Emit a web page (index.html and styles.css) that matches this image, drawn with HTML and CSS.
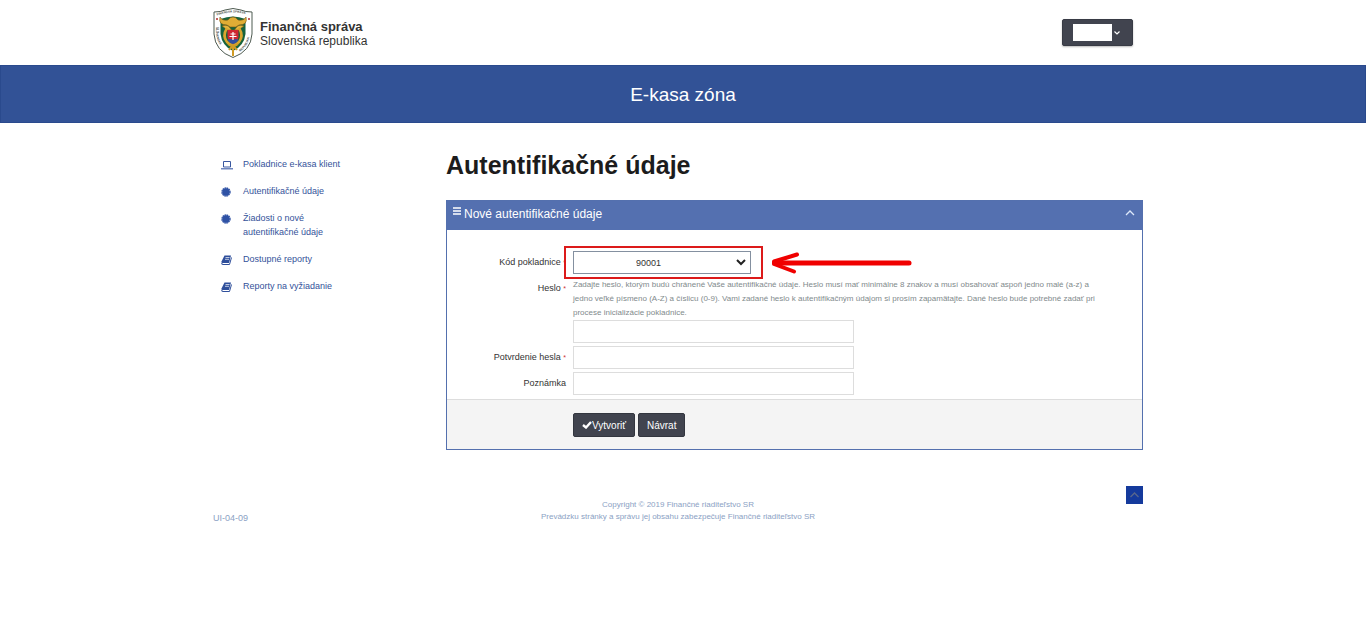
FILE: index.html
```html
<!DOCTYPE html>
<html lang="sk">
<head>
  <meta charset="UTF-8" />
  <meta name="viewport" content="width=device-width, initial-scale=1.0" />
  <title>E-kasa zóna - Autentifikačné údaje</title>
  <link rel="stylesheet" href="styles.css">
</head>
<body>
  <header class="container top">
    <a class="brand" href="#">
      <svg class="crest" viewBox="0 0 40 50" aria-hidden="true">
        <path d="M1 4 Q8 4 12 2 Q20 -1 28 2 Q32 4 39 4 V26 Q38 43 20 49.5 Q2 43 1 26 Z" fill="#fff" stroke="#4d5a50" stroke-width="1"/>
        <path d="M7.500 11 Q20 6 32.500 11 V26 Q31 38 20 43 Q9 38 7.500 26 Z" fill="#17633c"/>
        <path id="crest-top" d="M3 8 Q20 1 38 8" fill="none"/>
        <path id="crest-left" d="M3 15 V25 Q4 39 19 47" fill="none"/>
        <path id="crest-right" d="M22 47 Q36 40 37 25 V12" fill="none"/>
        <text class="crest-text"><textPath href="#crest-top" startOffset="1">FINANČNÁ SPRÁVA</textPath></text>
        <text class="crest-text"><textPath href="#crest-left" startOffset="4">SLOVENSKÁ</textPath></text>
        <text class="crest-text"><textPath href="#crest-right" startOffset="6">REPUBLIKA</textPath></text>
        <circle cx="4" cy="11" r="1" fill="#b02a2a"/><circle cx="36" cy="11" r="1" fill="#b02a2a"/>
        <path d="M7 9 Q5 17 14 17 L17 19 H23 L26 17 Q35 17 33 9 Q31 13 25 12 Q23 9 20 9 Q17 9 15 12 Q9 13 7 9Z" fill="#e0ad35" stroke="#7b5713" stroke-width=".6"/>
        <path d="M9 18 Q15 16 17 20 L20 24 L23 20 Q25 16 31 18 Q28 20 26 22 H14 Q12 20 9 18Z" fill="#e5b53c" stroke="#7b5713" stroke-width=".5"/>
        <path d="M14 20 Q9 28 14 34 Q20 40 26 34 Q31 28 26 20" fill="none" stroke="#d9a62e" stroke-width="2.600"/>
        <path d="M14.500 22 H25.500 V29 Q25 34 20 36 Q15 34 14.500 29Z" fill="#cf2732"/>
        <path d="M14.500 32 Q17 30 20 32 Q23 30 25.500 32 Q24 35 20 36 Q16 35 14.500 32Z" fill="#314f9f"/>
        <path d="M20 24 V32 M17.500 26 H22.500 M16.500 28.500 H23.500" stroke="#fff" stroke-width="1.200"/>
        <path d="M15 36 Q20 40 25 36 M16 42 Q20 36 24 42 M20 36 V48" fill="none" stroke="#d09b25" stroke-width="2"/>
      </svg>
      <span class="brand-text"><strong>Finančná správa</strong><span>Slovenská republika</span></span>
    </a>
    <button class="user-menu" type="button" aria-label="Používateľ">
      <span class="user-name"></span>
      <svg width="6" height="4" viewBox="0 0 6 4"><path d="M.5.5 3 3 5.500.5" fill="none" stroke="#fff" stroke-width="1.200"/></svg>
    </button>
  </header>

  <div class="banner">E-kasa zóna</div>

  <div class="container layout">
    <nav class="sidebar">
      <a href="#">
        <svg viewBox="0 0 12 12"><path d="M2.500 2.500H9.500V8H2.500Z" fill="none" stroke="#3a58a0"/><path d="M0 9H12V10.500H0Z" fill="#6f86bd"/></svg>
        <span>Pokladnice e-kasa klient</span>
      </a>
      <a href="#">
        <svg viewBox="0 0 12 12"><circle cx="5" cy="6" r="3.700" fill="#2f52a5"/><circle cx="5" cy="6" r="4" fill="none" stroke="#2f52a5" stroke-width="1.400" stroke-dasharray="1.600 .5"/></svg>
        <span>Autentifikačné údaje</span>
      </a>
      <a href="#">
        <svg viewBox="0 0 12 12"><circle cx="5" cy="6" r="3.700" fill="#2f52a5"/><circle cx="5" cy="6" r="4" fill="none" stroke="#2f52a5" stroke-width="1.400" stroke-dasharray="1.600 .5"/></svg>
        <span>Žiadosti o nové autentifikačné údaje</span>
      </a>
      <a href="#">
        <svg viewBox="0 0 12 12"><path d="M3.500 1.500H10L8 9H1.500Q0 9 .5 7.500Z" fill="#2f4f9b"/><path d="M4.500 3.500H8.500M4 5.300H8" stroke="#fff" stroke-width=".7"/><path d="M1 9Q0 10.500 2 10.500H8.500L10.500 3.500" fill="none" stroke="#2f4f9b"/></svg>
        <span>Dostupné reporty</span>
      </a>
      <a href="#">
        <svg viewBox="0 0 12 12"><path d="M3.500 1.500H10L8 9H1.500Q0 9 .5 7.500Z" fill="#2f4f9b"/><path d="M4.500 3.500H8.500M4 5.300H8" stroke="#fff" stroke-width=".7"/><path d="M1 9Q0 10.500 2 10.500H8.500L10.500 3.500" fill="none" stroke="#2f4f9b"/></svg>
        <span>Reporty na vyžiadanie</span>
      </a>
    </nav>

    <main>
      <h1>Autentifikačné údaje</h1>
      <form class="panel">
        <div class="panel-head">
          <svg class="bars" width="8" height="8" viewBox="0 0 8 8"><path d="M0 1H8M0 4H8M0 7H8" stroke="#fff" stroke-width="1.500"/></svg>
          <h2>Nové autentifikačné údaje</h2>
          <button class="collapse" type="button" aria-label="Zbaliť">
            <svg width="10" height="6" viewBox="0 0 10 6"><path d="M1 5 5 1 9 5" fill="none" stroke="#dde8fa" stroke-width="1.300"/></svg>
          </button>
        </div>
        <div class="fields">
          <label for="kod">Kód pokladnice <i>*</i></label>
          <div class="select-wrap">
            <select id="kod"><option>90001</option></select>
            <svg class="chevron" width="10" height="7" viewBox="0 0 10 7"><path d="M1 1 5 5 9 1" fill="none" stroke="#222" stroke-width="2"/></svg>
            <div class="highlight"></div>
            <svg class="arrow" width="142" height="24" viewBox="0 0 142 24"><path d="M139 12H5" fill="none" stroke="#f00000" stroke-width="5" stroke-linecap="round"/><path d="M27 3.500 4 10.500V13L24 20.500" fill="none" stroke="#f00000" stroke-width="4" stroke-linecap="round" stroke-linejoin="round"/></svg>
          </div>
          <label for="heslo">Heslo <i>*</i></label>
          <div>
            <p class="help">Zadajte heslo, ktorým budú chránené Vaše autentifikačné údaje. Heslo musí mať minimálne 8 znakov a musí obsahovať aspoň jedno malé (a-z) a<br>jedno veľké písmeno (A-Z) a číslicu (0-9). Vami zadané heslo k autentifikačným údajom si prosím zapamätajte. Dané heslo bude potrebné zadať pri<br>procese inicializácie pokladnice.</p>
            <input type="password" id="heslo">
          </div>
          <label for="potvrdenie">Potvrdenie hesla <i>*</i></label>
          <input type="password" id="potvrdenie">
          <label for="poznamka">Poznámka</label>
          <input type="text" id="poznamka">
        </div>
        <div class="actions">
          <button class="btn" type="button"><svg width="10" height="8" viewBox="0 0 10 8"><path d="M1 4 4 6.500 9 1" fill="none" stroke="#fff" stroke-width="2.400"/></svg>Vytvoriť</button>
          <button class="btn" type="button">Návrat</button>
        </div>
      </form>
    </main>
  </div>

  <footer class="container footer">
    <span class="code">UI-04-09</span>
    <p>Copyright © 2019 Finančné riaditeľstvo SR<br>Prevádzku stránky a správu jej obsahu zabezpečuje Finančné riaditeľstvo SR</p>
    <a class="to-top" href="#" aria-label="Hore"><svg width="9" height="6" viewBox="0 0 9 6"><path d="M.5 5 4.500 1 8.500 5" fill="none" stroke="#59678c" stroke-width="1.300"/></svg></a>
  </footer>
</body>
</html>
```

FILE: styles.css
```css
* { box-sizing: border-box; }
body { margin: 0; background: #fff; color: #333; font-family: "Liberation Sans", Arial, sans-serif; font-size: 9px; }
button, input, select { font-family: inherit; }
svg { display: block; flex-shrink: 0; }
.container { max-width: 940px; margin: 0 auto; padding-right: 10px; }

.top { display: flex; justify-content: space-between; align-items: center; height: 65px; padding-right: 20px; }
.brand { display: flex; align-items: center; gap: 7px; color: #333; text-decoration: none; }
.crest { width: 40px; height: 50px; }
.crest-text { font-size: 3px; font-weight: bold; fill: #3f4a44; }
.brand-text { display: flex; flex-direction: column; font-size: 12px; line-height: 15px; padding-top: 2px; }
.brand-text strong { font-size: 13px; }
.user-menu { display: flex; align-items: center; gap: 2px; width: 71px; height: 27px; padding: 0 10px; background: #41444f; border: 1px solid #383b45; border-radius: 2px; box-shadow: 0 1px 2px #bbb; }
.user-name { width: 39px; height: 17px; background: #fff; }

.banner { height: 58px; line-height: 58px; background: #325296; border: 1px solid #2a4a8d; color: #fff; font-size: 19px; text-align: center; }

.layout { display: grid; grid-template-columns: 233px minmax(0, 1fr); }
.sidebar { display: flex; flex-direction: column; gap: 13px; padding: 34px 100px 0 8px; }
.sidebar a { display: flex; gap: 10px; color: #34529a; line-height: 14px; text-decoration: none; }
.sidebar svg { width: 12px; height: 12px; margin-top: 2px; }
.sidebar span { white-space: normal; }

h1 { margin: 26px 0 19px; font-size: 25px; line-height: 32px; color: #1c1c1c; }
.panel { border: 1px solid #5470ae; }
.panel-head { display: flex; gap: 3px; height: 29px; padding: 0 7px 0 6px; background: #5470b0; color: #fff; }
.panel-head h2 { flex: 1; margin: 0; font-size: 12px; font-weight: normal; line-height: 26px; }
.bars { margin-top: 6px; }
.collapse { align-self: flex-start; margin-top: 9px; padding: 0; background: none; border: 0; }

.fields { display: grid; grid-template-columns: 119px minmax(0, 1fr); gap: 3px 7px; padding: 21px 16px 4px 0; }
label { text-align: right; line-height: 23px; color: #333; }
label i { color: #c33; font-size: 7px; font-style: normal; }
.fields input { display: block; width: 281px; height: 23px; border: 1px solid #ddd; background: #fff; }
.help { margin: 0; padding-top: 1px; font-size: 8px; line-height: 14px; color: #7f8a8c; }
.select-wrap { position: relative; width: 178px; }
select { display: block; width: 100%; height: 23px; padding: 0 0 0 62px; appearance: none; background: #fff; border: 1px solid #8490a0; border-radius: 0; color: #333; font-size: 9px; }
.chevron { position: absolute; right: 5px; top: 8px; }
.highlight { position: absolute; inset: -5px -12px -5px -9px; border: 2px solid #dc1a1a; pointer-events: none; }
.arrow { position: absolute; left: 197px; top: 0; }

.actions { display: flex; gap: 3px; padding: 13px 0 12px 126px; border-top: 1px solid #ddd; background: #f4f4f4; }
.btn { display: flex; align-items: center; height: 24px; padding: 0 8px; background: #41444f; border: 1px solid #33363f; border-radius: 2px; color: #fff; font-size: 10px; }

.footer { display: grid; grid-template-columns: 1fr auto 1fr; margin-top: 36px; color: #8b9fc4; }
.footer p { margin: 13px 0 0; font-size: 8px; line-height: 12px; text-align: center; }
.code { align-self: end; line-height: 10px; }
.to-top { display: flex; align-items: center; justify-content: center; justify-self: end; width: 17px; height: 18px; background: #153a9c; }
```
